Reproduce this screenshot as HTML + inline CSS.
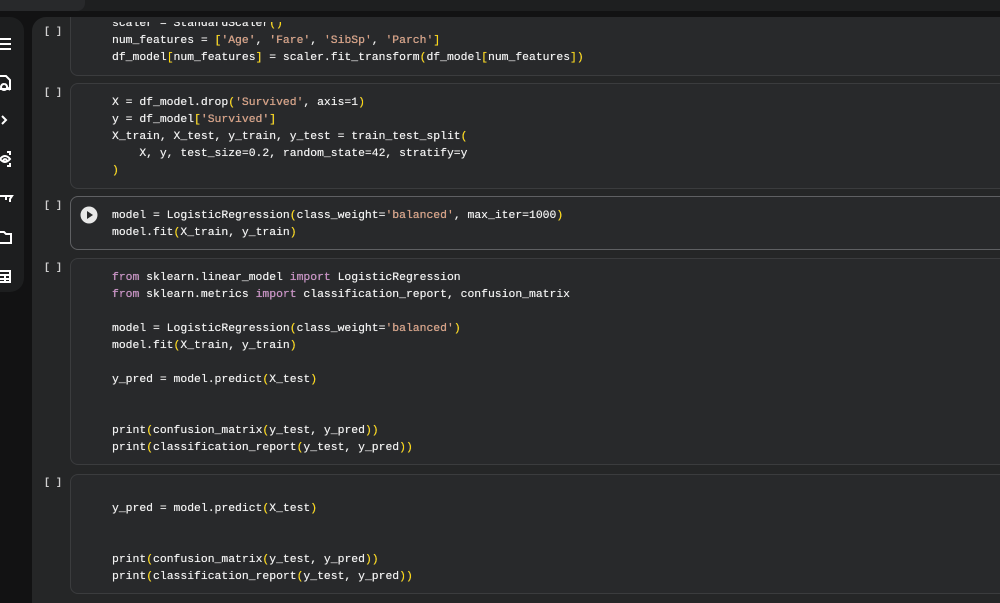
<!DOCTYPE html>
<html><head><style>
html,body{margin:0;width:1000px;height:603px;overflow:hidden;}
body{background:#121213;position:relative;font-family:"Liberation Mono",monospace;}
.top{position:absolute;left:0;top:0;width:1000px;height:11px;background:#1e1f20;}
.top2{position:absolute;left:0;top:0;width:85px;height:11px;background:#28292b;border-radius:0 0 8px 0;}
.side{position:absolute;left:0;top:17px;width:24px;height:275px;background:#1d1e1f;border-radius:0 14px 14px 0;}
.main{position:absolute;left:32px;top:17px;width:980px;height:600px;background:#252627;border-radius:14px 0 0 0;}
.cell{position:absolute;left:70px;width:940px;background:#28292b;border:1px solid #3b3c3e;border-radius:8px;}
.act{border-color:#5f6063;}
.br{position:absolute;left:44px;color:#d0d0d0;font-size:10px;font-weight:bold;}
pre{position:absolute;left:112px;margin:0;font-family:"Liberation Mono",monospace;font-size:11.4px;line-height:17px;color:#f0f0f0;text-shadow:0 0 0.4px #fff;}
.s{color:#d89a7a}.p{color:#ffd700}.k{color:#c586c0}
svg{position:absolute}
</style></head><body>
<div class="side"></div>
<svg style="left:0;top:36px" width="24" height="260" viewBox="0 0 24 260" fill="none" stroke="#fff" stroke-width="2">
<path d="M0 3h11M0 8h11M0 13h11"/>
<path d="M0 40h6l4 4v9H0M4 48a3 3 0 1 0 .1 0M7 51l3 3"/>
<path d="M2 80l4 4-4 4"/>
<path d="M0 123q5-6 10 0q-5 6-10 0M5 123a1.5 1.5 0 1 0 .1 0M7 116h3v3M7 130h3v-3"/>
<path d="M0 160h12l-2 3v3M6 160v4"/>
<path d="M0 196h4l2 2h5v9H0"/>
<path d="M0 235h10v11H0M0 239h10M0 243h10M5 239v7"/>
</svg>
<div class="main"></div>

<div class="cell" style="top:10px;height:64px"></div>
<div class="br" style="top:27px">[ ]</div>
<pre style="top:16px">scaler = StandardScaler<span class="p">()</span>
num_features = <span class="p">[</span><span class="s">'Age'</span>, <span class="s">'Fare'</span>, <span class="s">'SibSp'</span>, <span class="s">'Parch'</span><span class="p">]</span>
df_model<span class="p">[</span>num_features<span class="p">]</span> = scaler.fit_transform<span class="p">(</span>df_model<span class="p">[</span>num_features<span class="p">])</span></pre>
<div class="top"></div><div class="top2"></div>
<div style="position:absolute;left:0;top:11px;width:1000px;height:6px;background:#121213"></div>
<div style="position:absolute;left:32px;top:17px;width:968px;height:6px;background:transparent;"></div>
<div style="position:absolute;left:100px;top:17px;width:600px;height:5px;background:#28292b"></div>

<div class="cell" style="top:83px;height:104px"></div>
<div class="br" style="top:88px">[ ]</div>
<pre style="top:95px">X = df_model.drop<span class="p">(</span><span class="s">'Survived'</span>, axis=1<span class="p">)</span>
y = df_model<span class="p">[</span><span class="s">'Survived'</span><span class="p">]</span>
X_train, X_test, y_train, y_test = train_test_split<span class="p">(</span>
    X, y, test_size=0.2, random_state=42, stratify=y
<span class="p">)</span></pre>

<div class="cell act" style="top:196px;height:52px"></div>
<div class="br" style="top:201px">[ ]</div>
<svg style="left:80px;top:206px" width="18" height="18"><circle cx="9" cy="9" r="8.5" fill="#e8e8e8"/><path d="M7 5l6 4-6 4z" fill="#28292b"/></svg>
<pre style="top:208px">model = LogisticRegression<span class="p">(</span>class_weight=<span class="s">'balanced'</span>, max_iter=1000<span class="p">)</span>
model.fit<span class="p">(</span>X_train, y_train<span class="p">)</span></pre>

<div class="cell" style="top:258px;height:205px"></div>
<div class="br" style="top:263px">[ ]</div>
<pre style="top:270px"><span class="k">from</span> sklearn.linear_model <span class="k">import</span> LogisticRegression
<span class="k">from</span> sklearn.metrics <span class="k">import</span> classification_report, confusion_matrix

model = LogisticRegression<span class="p">(</span>class_weight=<span class="s">'balanced'</span><span class="p">)</span>
model.fit<span class="p">(</span>X_train, y_train<span class="p">)</span>

y_pred = model.predict<span class="p">(</span>X_test<span class="p">)</span>


print<span class="p">(</span>confusion_matrix<span class="p">(</span>y_test, y_pred<span class="p">))</span>
print<span class="p">(</span>classification_report<span class="p">(</span>y_test, y_pred<span class="p">))</span></pre>

<div class="cell" style="top:474px;height:118px"></div>
<div class="br" style="top:478px">[ ]</div>
<pre style="top:501px">y_pred = model.predict<span class="p">(</span>X_test<span class="p">)</span>


print<span class="p">(</span>confusion_matrix<span class="p">(</span>y_test, y_pred<span class="p">))</span>
print<span class="p">(</span>classification_report<span class="p">(</span>y_test, y_pred<span class="p">))</span></pre>
</body></html>
